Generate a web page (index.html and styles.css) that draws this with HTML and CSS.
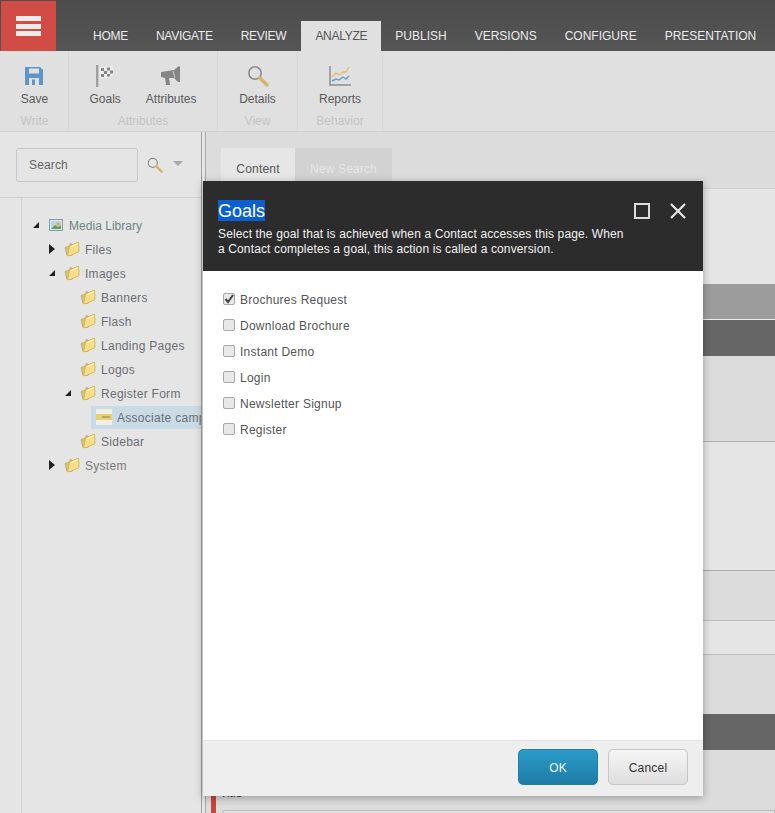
FILE: index.html
```html
<!DOCTYPE html>
<html lang="en">
<head>
<meta charset="utf-8">
<title>Goals</title>
<link rel="stylesheet" href="styles.css">
</head>
<body>
<svg class="defs" width="0" height="0" aria-hidden="true">
  <symbol id="folder" viewBox="0 0 16 16">
    <path d="M1 6.5 L6 4.5 L6 2.5 L8 3 L8 14.5 L3 14.5 Z" fill="#d9c27a" stroke="#b8a566" stroke-width=".8"/>
    <path d="M5.5 5 L14.5 1 L15 10.5 L6 14.7 L3.5 14.7 Z" fill="#f6df84" stroke="#cdb45e" stroke-width=".9"/>
    <path d="M6.5 5.8 L13.5 2.6" stroke="#fff3b8" stroke-width="1"/>
  </symbol>
  <symbol id="mag" viewBox="0 0 22 22">
    <circle cx="8" cy="8" r="6.2" fill="none" stroke="#8c8c8c" stroke-width="1.6"/>
    <path d="M13 13 L20 20" stroke="#d8b566" stroke-width="3.4" stroke-linecap="round"/>
  </symbol>
</svg>
<div class="app">
  <header class="topbar">
    <div class="logo"><span></span><span></span><span></span></div>
    <nav class="tabs">
      <span class="tab tight">HOME</span>
      <span class="tab tight">NAVIGATE</span>
      <span class="tab tight">REVIEW</span>
      <span class="tab active tight">ANALYZE</span>
      <span class="tab">PUBLISH</span>
      <span class="tab">VERSIONS</span>
      <span class="tab">CONFIGURE</span>
      <span class="tab">PRESENTATION</span>
    </nav>
  </header>

  <section class="ribbon">
    <div class="group g1">
      <div class="items">
        <div class="item">
          <svg class="ico" width="20" height="20" viewBox="0 0 20 20"><path d="M1 1 H16 L19 4 V19 H1 Z" fill="#5f95c8"/><rect x="5" y="2.5" width="10" height="5" fill="#e0e0e0"/><rect x="5" y="12" width="10" height="7" fill="#e0e0e0"/><rect x="8" y="13.5" width="3" height="5.5" fill="#5f95c8"/></svg>
          <span>Save</span>
        </div>
      </div>
      <div class="group-label">Write</div>
    </div>
    <div class="group g2">
      <div class="items">
        <div class="item">
          <svg class="ico" width="20" height="24" viewBox="0 0 20 24"><rect x="1" y="1" width="2.4" height="22" fill="#a0a0a0"/><path d="M4.5 3 L18 2 L18 13 L4.5 15 Z" fill="#ececec"/><path d="M6 4h3v3H6zM12 3.5h3v3h-3zM9 7h3v3H9zM15 6.5h3v3h-3zM6 10h3v3H6zM12 10h3v2.5h-3z" fill="#858585"/></svg>
          <span>Goals</span>
        </div>
        <div class="item">
          <svg class="ico" width="22" height="22" viewBox="0 0 22 22"><path d="M1 7 L14 5 L19 1 L20 2 V17 L18 17 L14 13 L9 13 L10 20 L6 20 L5 13 L1 12 Z" fill="#858585"/><path d="M13 6 L15 13" stroke="#cfcfcf" stroke-width="1"/></svg>
          <span>Attributes</span>
        </div>
      </div>
      <div class="group-label">Attributes</div>
    </div>
    <div class="group g3">
      <div class="items">
        <div class="item">
          <svg class="ico" width="22" height="22"><use href="#mag"/></svg>
          <span>Details</span>
        </div>
      </div>
      <div class="group-label">View</div>
    </div>
    <div class="group g4">
      <div class="items">
        <div class="item">
          <svg class="ico" width="22" height="20" viewBox="0 0 22 20"><path d="M1 0 V19 H22" fill="none" stroke="#8d8d8d" stroke-width="1.5"/><path d="M3 11 L7 7 L10 9 L14 6 L17 6 L20 1" fill="none" stroke="#e2bd6b" stroke-width="1.4"/><path d="M3 15 L7 13 L10 14 L14 11 L17 13 L20 10" fill="none" stroke="#6d9ccc" stroke-width="1.4"/></svg>
          <span>Reports</span>
        </div>
      </div>
      <div class="group-label">Behavior</div>
    </div>
  </section>

  <main class="workspace">
    <aside class="side">
      <div class="search-row">
        <div class="search">Search</div>
        <svg class="search-mag" width="16" height="16"><use href="#mag"/></svg>
        <span class="caret"></span>
      </div>
      <div class="tree">
        <div class="row lv0"><span class="tw open"></span>
          <svg class="node" width="14" height="12" viewBox="0 0 14 12"><rect x=".5" y=".5" width="13" height="11" fill="#dbe6ee" stroke="#7f9db5"/><rect x="2" y="2" width="10" height="8" fill="#bcd5e6"/><path d="M2 10 L6 6 L9 8 L12 6 V10 Z" fill="#6b9a54"/><circle cx="9" cy="5" r="1.6" fill="#e3a23c"/></svg>
          <span class="label lib">Media Library</span></div>
        <div class="row lv1"><span class="tw closed"></span><svg class="node" width="16" height="16"><use href="#folder"/></svg><span class="label">Files</span></div>
        <div class="row lv1"><span class="tw open"></span><svg class="node" width="16" height="16"><use href="#folder"/></svg><span class="label">Images</span></div>
        <div class="row lv2"><span class="tw"></span><svg class="node" width="16" height="16"><use href="#folder"/></svg><span class="label">Banners</span></div>
        <div class="row lv2"><span class="tw"></span><svg class="node" width="16" height="16"><use href="#folder"/></svg><span class="label">Flash</span></div>
        <div class="row lv2"><span class="tw"></span><svg class="node" width="16" height="16"><use href="#folder"/></svg><span class="label">Landing Pages</span></div>
        <div class="row lv2"><span class="tw"></span><svg class="node" width="16" height="16"><use href="#folder"/></svg><span class="label">Logos</span></div>
        <div class="row lv2"><span class="tw open"></span><svg class="node" width="16" height="16"><use href="#folder"/></svg><span class="label">Register Form</span></div>
        <div class="row lv3"><span class="tw short"></span>
          <div class="selected">
            <svg class="thumb" width="16" height="16" viewBox="0 0 16 16"><rect width="16" height="16" fill="#f1efe6"/><rect y="5" width="16" height="6" fill="#e7d06e"/><rect x="6" y="7" width="8" height="2" fill="#b3a873"/></svg>
            <span class="label">Associate campaign</span>
          </div>
        </div>
        <div class="row lv2"><span class="tw"></span><svg class="node" width="16" height="16"><use href="#folder"/></svg><span class="label">Sidebar</span></div>
        <div class="row lv1"><span class="tw closed"></span><svg class="node" width="16" height="16"><use href="#folder"/></svg><span class="label muted">System</span></div>
      </div>
    </aside>

    <section class="content">
      <div class="tabstrip">
        <span class="ctab">Content</span>
        <span class="ctab alt">New Search</span>
      </div>
      <div class="band b1"></div>
      <div class="band b2"></div>
      <div class="band b3"></div>
      <div class="band b4"></div>
      <div class="band b5"></div>
      <div class="band b6"></div>
      <div class="band b7"></div>
      <div class="band b8"></div>
      <div class="band b9"></div>
      <div class="last">
        <span class="redstrip"></span>
        <div class="last-inner">
          <span class="frag">Title</span>
          <div class="foot-box"></div>
        </div>
      </div>
    </section>
  </main>

  <div class="modal">
    <div class="m-head">
      <div class="m-title-row">
        <h1 class="m-title"><span class="sel-text">Goals</span></h1>
        <div class="m-ctrls">
          <span class="m-max"></span>
          <svg width="16" height="16" viewBox="0 0 16 16"><path d="M1 1 L15 15 M15 1 L1 15" stroke="#e6e6e6" stroke-width="2.2"/></svg>
        </div>
      </div>
      <p class="m-desc">Select the goal that is achieved when a Contact accesses this page. When<br>a Contact completes a goal, this action is called a conversion.</p>
    </div>
    <div class="m-body">
      <div class="check"><span class="box"><svg width="10" height="10" viewBox="0 0 10 10"><path d="M1.5 5 L4 8 L9 1" fill="none" stroke="#444" stroke-width="2"/></svg></span><span class="check-text">Brochures Request</span></div>
      <div class="check"><span class="box"></span><span class="check-text">Download Brochure</span></div>
      <div class="check"><span class="box"></span><span class="check-text">Instant Demo</span></div>
      <div class="check"><span class="box"></span><span class="check-text">Login</span></div>
      <div class="check"><span class="box"></span><span class="check-text">Newsletter Signup</span></div>
      <div class="check"><span class="box"></span><span class="check-text">Register</span></div>
    </div>
    <div class="m-foot">
      <button class="btn ok" type="button">OK</button>
      <button class="btn cancel" type="button">Cancel</button>
    </div>
  </div>
</div>
</body>
</html>
```

FILE: styles.css
```css
* { box-sizing: border-box; }
html, body { margin: 0; padding: 0; height: 100%; overflow: hidden; }
body { font-family: "Liberation Sans", Arial, sans-serif; font-size: 12px; color: #555; background: #e5e5e5; }
.defs { position: absolute; }
.app { position: relative; width: 775px; height: 813px; display: flex; flex-direction: column; overflow: hidden; }

.topbar { height: 51px; flex: none; background: linear-gradient(#4c4c4c, #555); display: flex; padding-top: 1px; padding-left: 1px; }
.logo { width: 55px; height: 50px; background: #d24c46; display: flex; flex-direction: column; gap: 2.5px; padding: 15px 15px 0; }
.logo span { display: block; height: 5px; background: #ececec; }
.tabs { display: flex; align-self: flex-end; margin-left: 23px; }
.tab { height: 30px; padding: 0 14px; line-height: 31px; color: #ebebeb; font-size: 12px; white-space: nowrap; }
.tab.tight { letter-spacing: -.27px; }
.tab.active { margin-left: 1px; background: #e0e0e0; color: #555; }

.ribbon { height: 81px; flex: none; background: #e0e0e0; border-bottom: 1px solid #d0d0d0; display: flex; padding-left: 1px; }
.group { display: flex; flex-direction: column; align-items: center; border-right: 1px solid #d6d6d6; }
.g1 { width: 68px; }
.g2 { width: 149px; }
.g3 { width: 80px; }
.g4 { width: 85px; }
.items { display: flex; gap: 25px; height: 60px; padding-top: 13px; }
.item { display: flex; flex-direction: column; align-items: center; color: #5a5a5a; }
.ico { height: 24px; display: block; margin-bottom: 4px; }
.group-label { color: #c4c4c4; line-height: 16px; margin-top: 2px; }

.workspace { flex: 1; display: flex; min-height: 0; }
.side { width: 202px; flex: none; background: #e5e5e5; border-right: 1px solid #a0a0a0; display: flex; flex-direction: column; overflow: hidden; }
.search-row { height: 66px; flex: none; border-bottom: 1px solid #cfcfcf; display: flex; align-items: flex-start; padding: 16px 0 0 16px; }
.search { width: 122px; height: 34px; border: 1px solid #c6c6c6; border-radius: 3px; padding-left: 12px; line-height: 32px; color: #666; letter-spacing: .15px; }
.search-mag { margin: 9px 0 0 9px; }
.caret { width: 0; height: 0; margin: 13px 0 0 10px; border: 5px solid transparent; border-top-color: #a8a8a8; border-bottom: 0; }
.tree { flex: 1; margin-left: 21px; border-left: 1px solid #d2d2d2; padding-top: 15px; }
.row { height: 24px; display: flex; align-items: center; white-space: nowrap; }
.lv0 { padding-left: 6px; }
.lv1 { padding-left: 22px; }
.lv2 { padding-left: 38px; }
.lv3 { padding-left: 54px; }
.tw { width: 16px; flex: none; display: flex; justify-content: center; }
.tw.short { width: 15px; }
.tw.closed::before { content: ""; border-left: 6px solid #222; border-top: 5px solid transparent; border-bottom: 5px solid transparent; }
.tw.open::before { content: ""; border-right: 6px solid #222; border-top: 6px solid transparent; }
.node { flex: none; margin-left: 4px; }
.lv0 .node { margin-left: 5px; margin-right: 1px; }
.label { margin-left: 5px; padding-top: 2px; color: #6a6e74; letter-spacing: .28px; }
.label.lib { color: #6f8387; letter-spacing: .03px; }
.label.muted { color: #7a7a7a; }
.selected { flex: 1; height: 23px; background: #c9dbe4; display: flex; align-items: center; padding-left: 5px; }
.thumb { flex: none; }

.content { flex: 1; min-width: 0; margin-left: 3px; border-left: 1px solid #a8a8a8; display: flex; flex-direction: column; background: #e5e5e5; }
.tabstrip { height: 57px; flex: none; background: #dcdcdc; border-bottom: 1px solid #d2d2d2; display: flex; align-items: flex-end; padding-left: 15px; }
.ctab { height: 40px; line-height: 42px; text-align: center; color: #555; background: #e6e6e6; width: 74px; letter-spacing: .2px; }
.ctab.alt { background: #d2d2d2; color: #e6e6e6; width: 97px; letter-spacing: .15px; }
.band { flex: none; }
.b1 { height: 95px; background: #e5e5e5; }
.b2 { height: 36px; background: #9c9c9c; border-bottom: 1px solid #eee; }
.b3 { height: 36px; background: #666; }
.b4 { height: 86px; background: #dcdcdc; border-bottom: 1px solid #ababab; }
.b5 { height: 129px; background: #e5e5e5; border-bottom: 1px solid #ababab; }
.b6 { height: 50px; background: #dcdcdc; border-bottom: 1px solid #bcbcbc; }
.b7 { height: 34px; background: #e5e5e5; border-bottom: 1px solid #bcbcbc; }
.b8 { height: 59px; background: #dcdcdc; }
.b9 { height: 36px; background: #666; }
.last { flex: 1; display: flex; background: #dcdcdc; padding-left: 5px; }
.redstrip { width: 5px; background: #c9453f; flex: none; }
.last-inner { flex: 1; margin-left: 4px; display: flex; flex-direction: column; padding-top: 37px; overflow: hidden; }
.frag { color: #333; line-height: 12px; height: 12px; flex: none; }
.foot-box { flex: 1; margin: 11px 0 0 2px; border: 1px solid #bcbcbc; border-bottom: 0; border-radius: 3px 0 0 0; background: #e2e2e2; }

.modal { position: absolute; left: 203px; top: 181px; width: 500px; height: 615px; background: #fff; box-shadow: 0 2px 8px rgba(0,0,0,.3); display: flex; flex-direction: column; }
.m-head { height: 90px; flex: none; background: #2c2c2c; padding: 19px 17px 0 15px; color: #fff; }
.m-title-row { display: flex; justify-content: space-between; align-items: center; height: 21px; }
.m-title { margin: 0; font-size: 18px; font-weight: 400; line-height: 21px; }
.sel-text { background: #0b5fd0; display: block; height: 21px; line-height: 23px; }
.m-ctrls { display: flex; align-items: center; gap: 20px; }
.m-max { display: block; width: 16px; height: 16px; border: 2px solid #dcdcdc; }
.m-desc { margin: 6px 0 0; font-size: 12px; line-height: 15px; color: #f2f2f2; letter-spacing: .13px; }
.m-body { flex: 1; padding: 15px 0 0 20px; }
.check { height: 26px; display: flex; align-items: center; color: #555; }
.check-text { padding-top: 2px; letter-spacing: .26px; }
.box { width: 12px; height: 12px; flex: none; margin-right: 5px; border: 1px solid #a9a9a9; border-radius: 2px; background: #e8e8e8; display: flex; align-items: center; justify-content: center; }
.m-foot { height: 56px; flex: none; background: #eee; border-top: 1px solid #e2e2e2; display: flex; justify-content: flex-end; gap: 10px; padding: 8px 15px 0 0; }
.btn { width: 80px; height: 36px; padding: 2px 0 0; border-radius: 5px; font: 12px "Liberation Sans", Arial, sans-serif; letter-spacing: .2px; }
.ok { background: linear-gradient(#2a9cca, #1e7ca6); border: 1px solid #1f7fa9; color: #f4f4f4; }
.cancel { background: linear-gradient(#f5f5f5, #dedede); border: 1px solid #c6c6c6; color: #333; }
```
